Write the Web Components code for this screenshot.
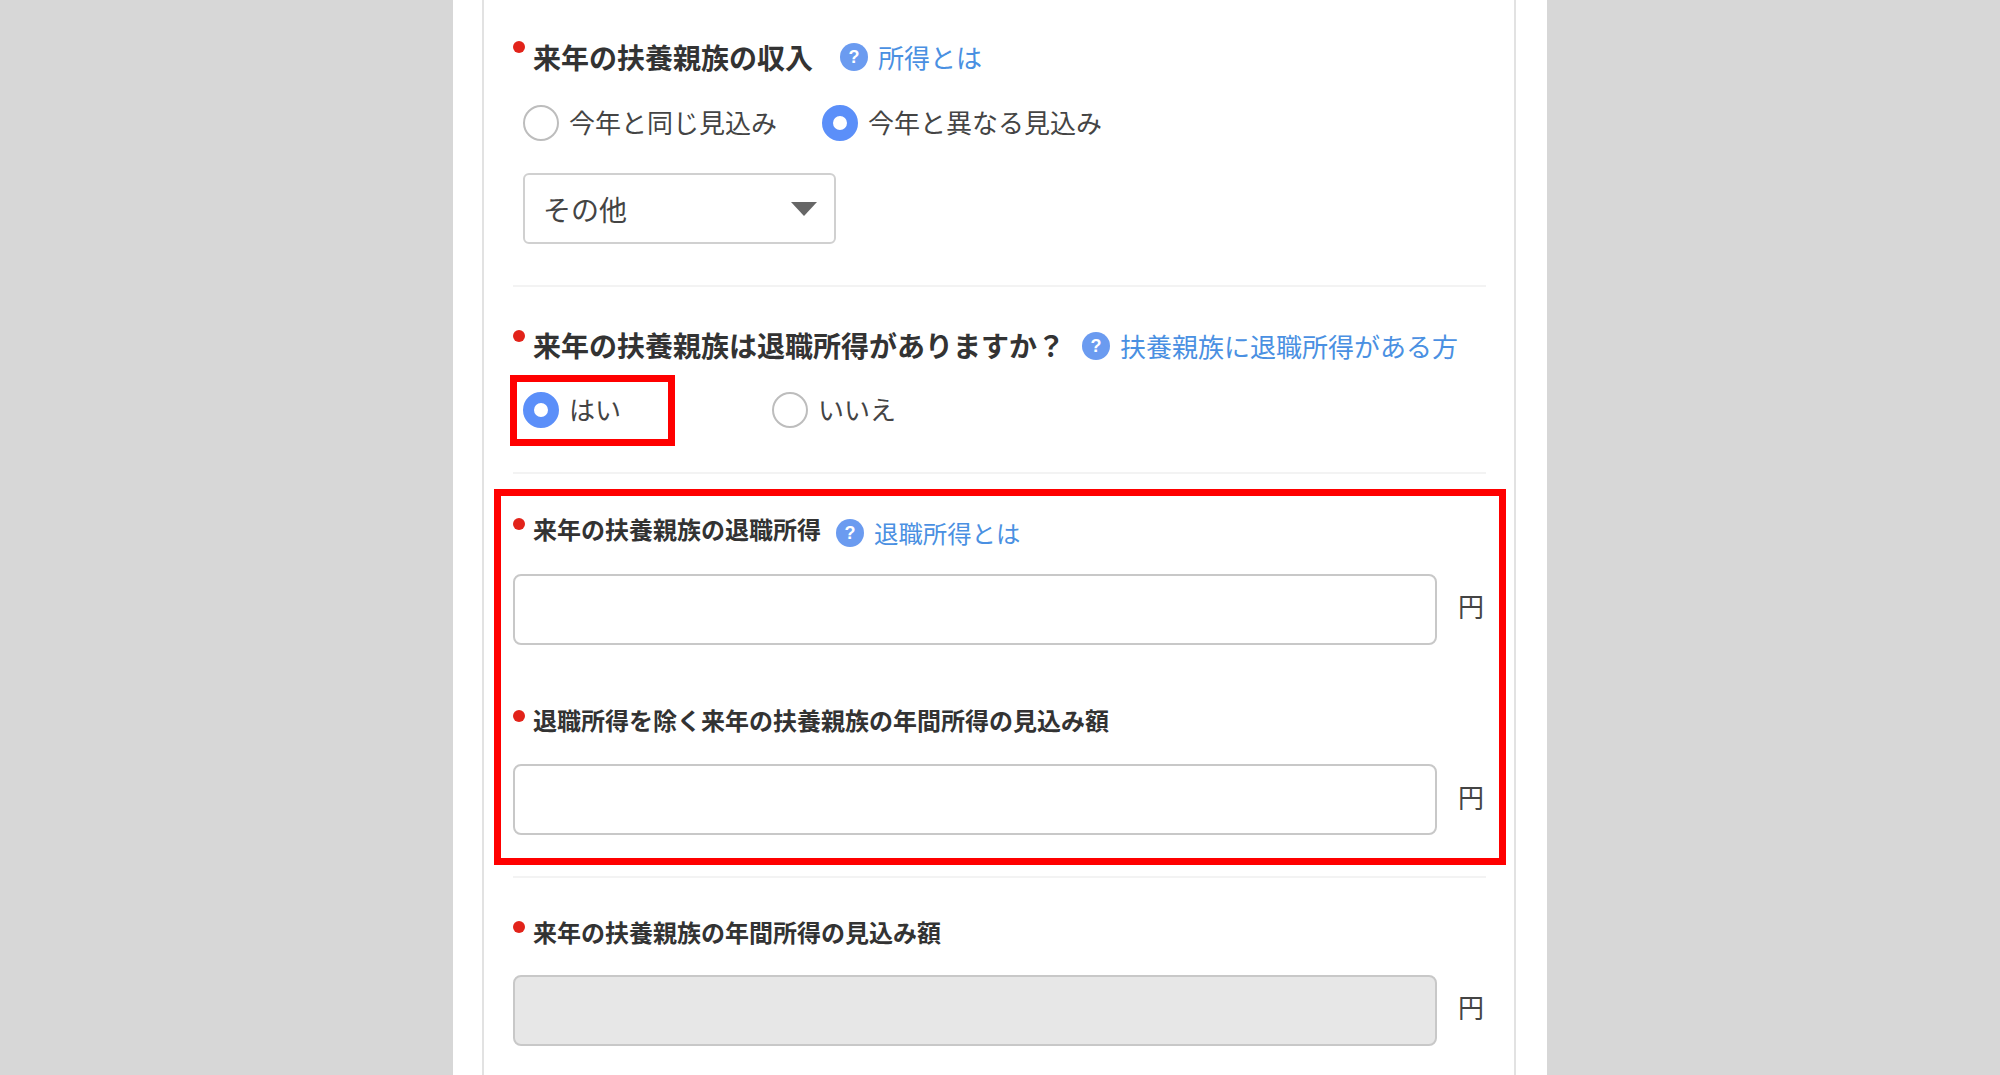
<!DOCTYPE html>
<html lang="ja">
<head>
<meta charset="utf-8">
<title>来年の扶養親族の収入</title>
<style>
  html, body { margin: 0; height: 100%; overflow: hidden; background: #d7d7d7; }
  body { font-family: "Noto Sans CJK JP", "Liberation Sans", sans-serif; color: #444; }
</style>
</head>
<body>
<form-page>
  <form-section pad="37px 0 41px">
    <field-title large>
      来年の扶養親族の収入
      <help-link slot="link" gap="27" size="26">所得とは</help-link>
    </field-title>
    <radio-group mt="28">
      <radio-option width="299">今年と同じ見込み</radio-option>
      <radio-option checked>今年と異なる見込み</radio-option>
    </radio-group>
    <select-box>その他</select-box>
  </form-section>

  <form-section pad="38px 0 44px">
    <field-title large style="--dot-top:5px">
      来年の扶養親族は退職所得がありますか？
      <help-link slot="link" gap="17" size="26" style="margin-top:2px">扶養親族に退職所得がある方</help-link>
    </field-title>
    <radio-group mt="27">
      <radio-option checked width="249">はい</radio-option>
      <radio-option>いいえ</radio-option>
      <highlight-box style="top:-17px;left:-3px;width:165px;height:71px"></highlight-box>
    </radio-group>
  </form-section>

  <form-section pad="35px 0 41px">
    <field-title>
      来年の扶養親族の退職所得
      <help-link slot="link" gap="15" size="24.4" style="margin-top:8px">退職所得とは</help-link>
    </field-title>
    <amount-input mt="25" lift="4"></amount-input>
    <field-title style="margin-top:55px;--dot-top:10px">退職所得を除く来年の扶養親族の年間所得の見込み額</field-title>
    <amount-input mt="24" lift="3"></amount-input>
    <highlight-box style="top:15px;left:-19px;width:1012px;height:376px"></highlight-box>
  </form-section>

  <form-section pad="34px 0 0" last>
    <field-title>来年の扶養親族の年間所得の見込み額</field-title>
    <amount-input mt="23" lift="4" disabled></amount-input>
  </form-section>
</form-page>

<script>
class FormPage extends HTMLElement {
  constructor() {
    super();
    this.attachShadow({ mode: 'open' });
    this.shadowRoot.innerHTML = `
      <style>
        :host {
          display: block;
          box-sizing: border-box;
          width: 1094px;
          height: 1075px;
          margin: 0 auto;
          padding: 0 31px 0 29px;
          background: #fff;
          overflow: hidden;
        }
        #card {
          box-sizing: border-box;
          height: 100%;
          padding: 0 28px 0 29px;
          border-left: 2px solid #e2e2e2;
          border-right: 2px solid #e2e2e2;
        }
      </style>
      <div id="card"><slot></slot></div>
    `;
  }
}

class FormSection extends HTMLElement {
  constructor() {
    super();
    this.attachShadow({ mode: 'open' });
    this.shadowRoot.innerHTML = `
      <style>
        :host {
          display: block;
          position: relative;
          border-bottom: 2px solid #f3f3f3;
        }
        :host([last]) { border-bottom: 0; }
      </style>
      <slot></slot>
    `;
  }

  connectedCallback() {
    this.style.padding = this.getAttribute('pad');
  }
}

class FieldTitle extends HTMLElement {
  constructor() {
    super();
    this.attachShadow({ mode: 'open' });
    this.shadowRoot.innerHTML = `
      <style>
        :host {
          display: flex;
          align-items: center;
          height: 40px;
          font-size: 24px;
          line-height: 40px;
          font-weight: 700;
          color: #333;
          white-space: nowrap;
        }
        :host([large]) { font-size: 28px; }
        #dot {
          flex: none;
          align-self: flex-start;
          width: 12px;
          height: 12px;
          margin: var(--dot-top, 9px) 8px 0 0;
          border-radius: 50%;
          background: #e2231a;
        }
        :host([large]) #dot { margin-top: var(--dot-top, 4px); }
      </style>
      <span id="dot"></span>
      <slot></slot>
      <slot name="link"></slot>
    `;
  }
}

class HelpLink extends HTMLElement {
  constructor() {
    super();
    this.attachShadow({ mode: 'open' });
    this.shadowRoot.innerHTML = `
      <style>
        :host {
          display: inline-flex;
          align-items: center;
          gap: 10px;
          font-weight: 400;
          color: #4a90e2;
        }
        #icon {
          flex: none;
          display: flex;
          align-items: center;
          justify-content: center;
          width: 28px;
          height: 28px;
          border-radius: 50%;
          background: #6b9bf0;
          color: #fff;
          font: 700 18px/28px "Liberation Sans", sans-serif;
        }
      </style>
      <span id="icon">?</span>
      <slot></slot>
    `;
  }

  connectedCallback() {
    this.style.marginLeft = this.getAttribute('gap') + 'px';
    this.style.fontSize = this.getAttribute('size') + 'px';
  }
}

class RadioGroup extends HTMLElement {
  constructor() {
    super();
    this.attachShadow({ mode: 'open' });
    this.shadowRoot.innerHTML = `
      <style>
        :host {
          display: flex;
          position: relative;
          padding-left: 10px;
        }
      </style>
      <slot></slot>
    `;
  }

  connectedCallback() {
    this.style.marginTop = this.getAttribute('mt') + 'px';
  }
}

class RadioOption extends HTMLElement {
  constructor() {
    super();
    this.attachShadow({ mode: 'open' });
    this.shadowRoot.innerHTML = `
      <style>
        :host {
          display: flex;
          align-items: center;
          gap: 10px;
          height: 36px;
          font-size: 26px;
          line-height: 34px;
          color: #444;
          white-space: nowrap;
        }
        #mark {
          flex: none;
          box-sizing: border-box;
          width: 36px;
          height: 36px;
          border: 2px solid #bdbdbd;
          border-radius: 50%;
          background: #fff;
        }
        :host([checked]) #mark {
          border: 11px solid #5b8ff9;
        }
        #label { padding-bottom: 2px; }
      </style>
      <span id="mark"></span>
      <span id="label"><slot></slot></span>
    `;
  }

  connectedCallback() {
    if (this.hasAttribute('width')) this.style.width = this.getAttribute('width') + 'px';
  }
}

class SelectBox extends HTMLElement {
  constructor() {
    super();
    this.attachShadow({ mode: 'open' });
    this.shadowRoot.innerHTML = `
      <style>
        :host {
          display: flex;
          align-items: center;
          justify-content: space-between;
          box-sizing: border-box;
          width: 313px;
          height: 71px;
          margin: 32px 0 0 10px;
          padding: 0 17px 0 18px;
          border: 2px solid #d0d0d0;
          border-radius: 6px;
          font-size: 28px;
          color: #444;
        }
        svg { display: block; }
      </style>
      <slot></slot>
      <svg width="26" height="14" viewBox="0 0 26 14"><path d="M0 0h26L13 14z" fill="#666"/></svg>
    `;
  }
}

class AmountInput extends HTMLElement {
  constructor() {
    super();
    this.attachShadow({ mode: 'open' });
    this.shadowRoot.innerHTML = `
      <style>
        :host {
          display: flex;
          align-items: center;
          gap: 21px;
          font-size: 26px;
          color: #444;
        }
        input {
          box-sizing: border-box;
          width: 924px;
          height: 71px;
          margin: 0;
          padding: 0 16px;
          border: 2px solid #c8c8c8;
          border-radius: 8px;
          background: #fff;
          outline: none;
        }
        input:disabled { background: #e7e7e7; }
      </style>
      <input type="text">
      <span id="unit">円</span>
    `;
  }

  connectedCallback() {
    this.style.marginTop = this.getAttribute('mt') + 'px';
    this.shadowRoot.querySelector('input').disabled = this.hasAttribute('disabled');
    // the unit sits a little above the input's centre, by a different amount per row
    this.shadowRoot.querySelector('#unit').style.paddingBottom = this.getAttribute('lift') * 2 + 'px';
  }
}

class HighlightBox extends HTMLElement {
  constructor() {
    super();
    this.attachShadow({ mode: 'open' });
    this.shadowRoot.innerHTML = `
      <style>
        :host {
          display: block;
          position: absolute;
          box-sizing: border-box;
          border: 7px solid #f00;
          pointer-events: none;
        }
      </style>
    `;
  }
}

customElements.define('form-page', FormPage);
customElements.define('form-section', FormSection);
customElements.define('field-title', FieldTitle);
customElements.define('help-link', HelpLink);
customElements.define('radio-group', RadioGroup);
customElements.define('radio-option', RadioOption);
customElements.define('select-box', SelectBox);
customElements.define('amount-input', AmountInput);
customElements.define('highlight-box', HighlightBox);
</script>
</body>
</html>
